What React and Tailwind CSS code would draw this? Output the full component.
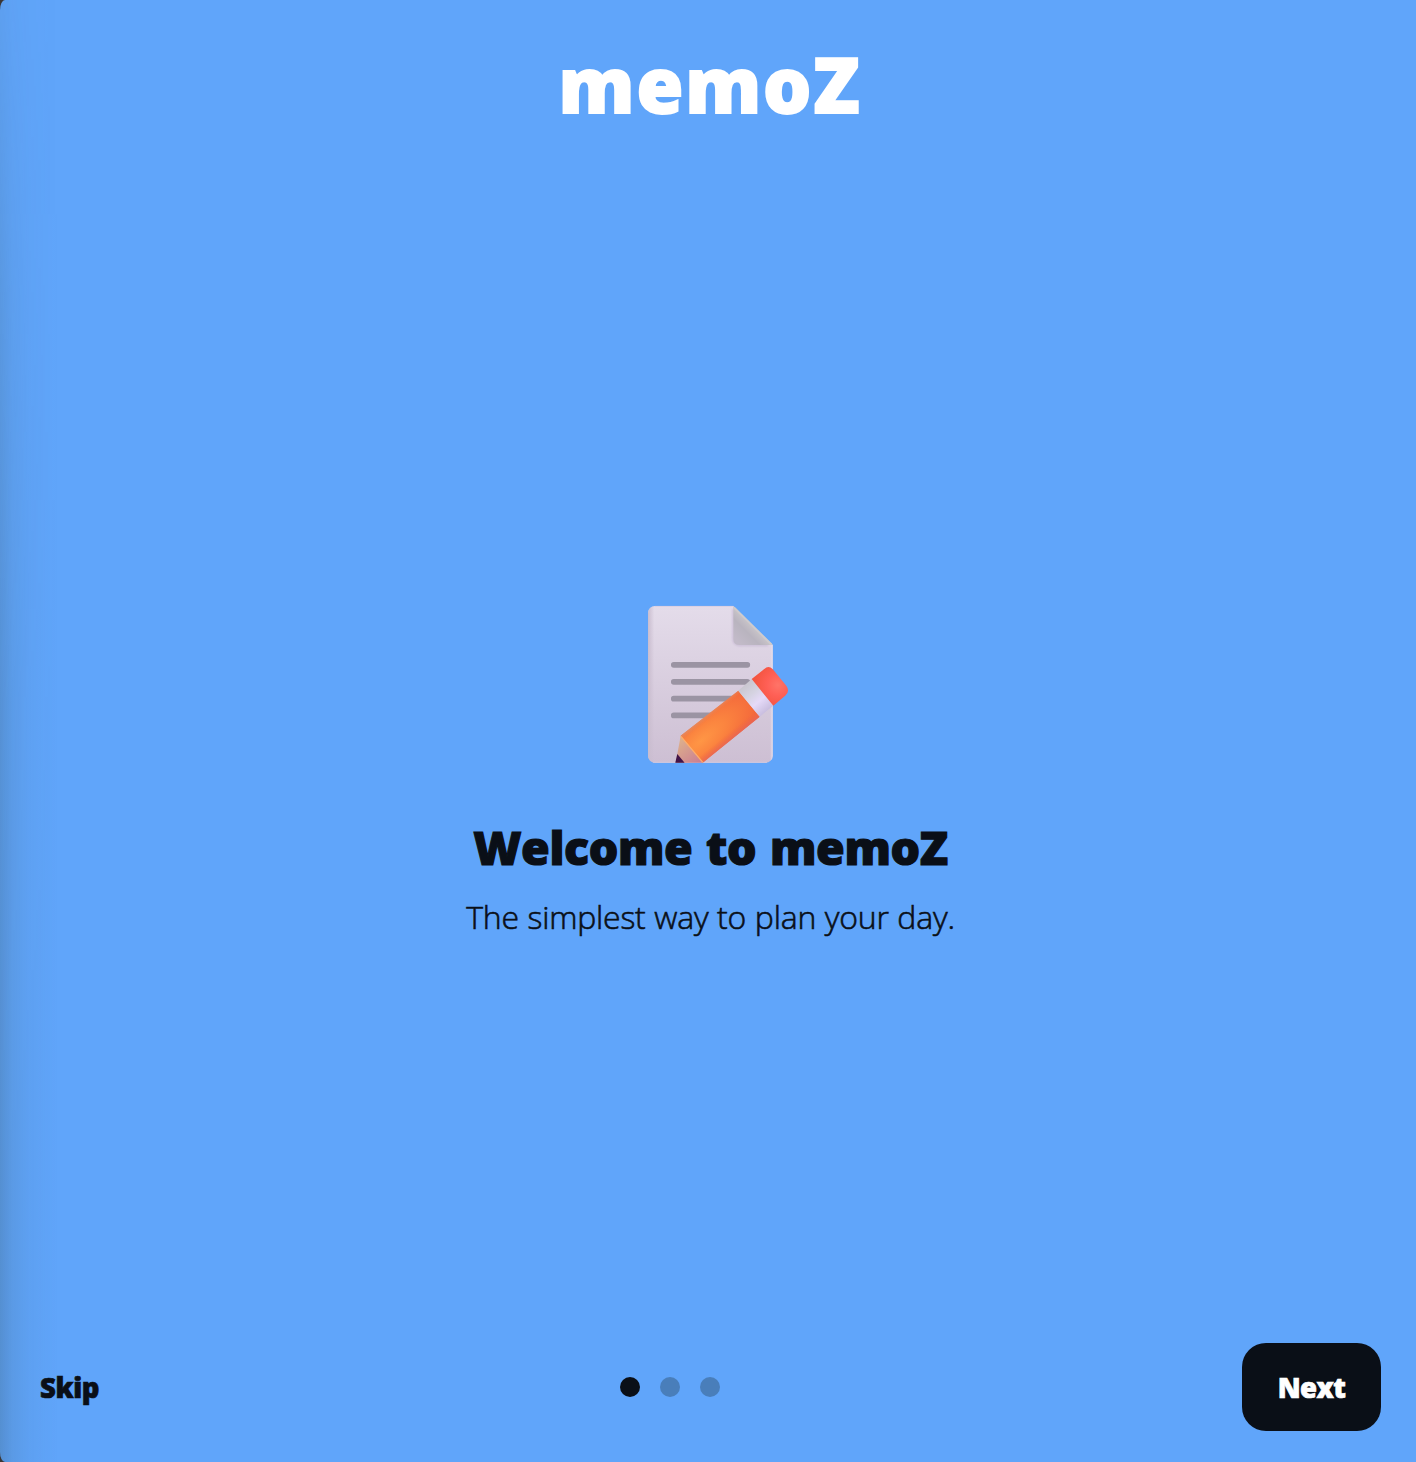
import React from "react";

const display = "font-['Open_Sans','Noto_Sans',sans-serif] font-extrabold";

function MemoIcon() {
  return (
    <svg width="145" height="159" viewBox="0 0 145 159" aria-label="Memo">
      <defs>
        <linearGradient id="paper" x1="0" y1="0" x2="0" y2="1">
          <stop offset="0" stopColor="#e4dcea" />
          <stop offset="1" stopColor="#cdbfd3" />
        </linearGradient>
        <linearGradient id="paperEdge" x1="0" y1="0" x2="1" y2="0">
          <stop offset="0" stopColor="#c9bdce" />
          <stop offset="0.05" stopColor="#c9bccf" stopOpacity="0" />
          <stop offset="0.98" stopColor="#e9e0ee" stopOpacity="0" />
          <stop offset="1" stopColor="#e4dce8" />
        </linearGradient>
        <linearGradient id="fold" gradientUnits="userSpaceOnUse" x1="92" y1="37" x2="107" y2="22">
          <stop offset="0" stopColor="#c2bac8" />
          <stop offset="0.6" stopColor="#b9b4bf" />
          <stop offset="1" stopColor="#c8c4c9" />
        </linearGradient>
        <radialGradient id="body" gradientUnits="userSpaceOnUse" cx="0" cy="0" r="1" gradientTransform="translate(55 137) rotate(-40) scale(68 26)">
          <stop offset="0" stopColor="#ff9645" />
          <stop offset="0.45" stopColor="#fb843f" />
          <stop offset="1" stopColor="#f4693b" />
        </radialGradient>
        <linearGradient id="bodyEdge" gradientUnits="userSpaceOnUse" x1="63.5" y1="109.2" x2="85" y2="135.5">
          <stop offset="0" stopColor="#e28a62" stopOpacity="0.8" />
          <stop offset="0.14" stopColor="#f27a3e" stopOpacity="0" />
          <stop offset="0.8" stopColor="#ef6540" stopOpacity="0" />
          <stop offset="1" stopColor="#e66558" stopOpacity="0.8" />
        </linearGradient>
        <linearGradient id="band" gradientUnits="userSpaceOnUse" x1="98" y1="81" x2="120" y2="107">
          <stop offset="0" stopColor="#c9c6cf" />
          <stop offset="0.35" stopColor="#d5d3e1" />
          <stop offset="0.65" stopColor="#e5daf8" />
          <stop offset="1" stopColor="#cabfe0" />
        </linearGradient>
        <radialGradient id="eraser" gradientUnits="userSpaceOnUse" cx="132" cy="81" r="24">
          <stop offset="0" stopColor="#ff7468" />
          <stop offset="0.45" stopColor="#ff6056" />
          <stop offset="1" stopColor="#f4543f" />
        </radialGradient>
        <linearGradient id="wood" gradientUnits="userSpaceOnUse" x1="33" y1="138" x2="52" y2="160">
          <stop offset="0" stopColor="#dcae8c" />
          <stop offset="1" stopColor="#cb7f92" />
        </linearGradient>
        <filter id="soft" x="-20%" y="-20%" width="140%" height="140%">
          <feGaussianBlur stdDeviation="0.9" />
        </filter>
      </defs>
      <path d="M9 2H87.3L126.7 41V152a7 7 0 0 1-7 6.8H9a7 7 0 0 1-7-7V9a7 7 0 0 1 7-7Z" fill="url(#paper)" />
      <path d="M9 2H87.3L126.7 41V152a7 7 0 0 1-7 6.8H9a7 7 0 0 1-7-7V9a7 7 0 0 1 7-7Z" fill="url(#paperEdge)" />
      <path d="M9 2.4H87.3M7 158.3H121" stroke="#d8cde0" strokeWidth="0.8" />
      <path d="M87.3 5V35q0 6.2 7 6.2H122" fill="none" stroke="#c2b3d0" strokeWidth="1.4" filter="url(#soft)" />
      <path d="M87.3 2 126.7 41H93.5Q87.3 41 87.3 35Z" fill="url(#fold)" />
      <path d="M88 3.5 125.5 40.5" stroke="#d0cbcb" strokeWidth="1.8" />
      <g stroke="#9b94a3" strokeWidth="5.7" strokeLinecap="round">
        <path d="M27.8 60.8H101.3M27.8 77.8H101.3M27.8 94.7H90M27.8 111.4H72" />
      </g>
      <path d="M34.7 131.7 57.3 158.7H29.7L31.3 150Z" fill="url(#wood)" />
      <path d="M31.3 150 38.6 158.8H29.3Z" fill="#421449" />
      <path d="M34.7 131.7 92.3 86.7 113.7 112.7 62 154.6Q58 158 56.8 158.4Z" fill="url(#body)" />
      <path d="M34.7 131.7 92.3 86.7 113.7 112.7 62 154.6Q58 158 56.8 158.4Z" fill="url(#bodyEdge)" />
      <path d="M34.9 132.3 56.8 158.3" stroke="#ffae68" strokeWidth="1.3" />
      <path d="M92.3 86.7 105.7 75 127.3 101.7 113.7 112.7Z" fill="url(#band)" />
      <path d="M105.7 75 118.3 65Q122.5 61 126.8 65.2L140.3 81.8Q144.3 87.3 139.2 91.7L127.3 101.7Z" fill="url(#eraser)" />
    </svg>
  );
}

const dots = ["bg-[#0a0f17]", "bg-[#497eba]", "bg-[#497eba]"];

export default function App() {
  return (
    <div className="h-[1462px] w-[1416px] bg-[#3b3635]">
      <div className="relative flex h-full flex-col overflow-hidden rounded-tl-[5px_10px] rounded-bl-[5px_10px] bg-[#60a5fa] font-['Open_Sans','Noto_Sans',sans-serif] text-[#0a0f17]">
        <div className="pointer-events-none absolute inset-y-0 left-0 w-[60px] bg-[linear-gradient(to_right,rgba(50,75,80,0.24)_0px,rgba(50,75,80,0.12)_12px,rgba(50,75,80,0.05)_28px,transparent_58px)] [mask-image:linear-gradient(to_bottom,rgba(0,0,0,0.25),rgba(0,0,0,0.6)_300px,rgba(0,0,0,0.9)_700px,black_1200px)]" />
        <header className="flex h-[168px] shrink-0 items-center justify-center pl-1">
          <h1 className={`${display} text-[76px] leading-none tracking-[1.8px] text-white [-webkit-text-stroke:1.8px_white]`}>memoZ</h1>
        </header>
        <main className="flex flex-1 flex-col items-center pt-[436px]">
          <div className="pl-[21px]"><MemoIcon /></div>
          <h2 className={`${display} mt-[52px] pl-[5px] text-[46.5px] leading-[64px] tracking-[-0.4px] [word-spacing:2px] whitespace-nowrap [-webkit-text-stroke:1.2px_#0a0f17]`}>Welcome to memoZ</h2>
          <p className="mt-[16px] pl-[5px] text-[32px] leading-[44px] font-light tracking-[-0.22px] [word-spacing:0.6px] whitespace-nowrap [-webkit-text-stroke:0.6px_#0a0f17]">The simplest way to plan your day.</p>
        </main>
        <footer className="flex h-[119px] shrink-0 items-start justify-between pr-[35px] pl-10">
          <button className={`${display} h-[88px] w-[58px] pt-[2px] text-left text-[27.5px] tracking-[-0.4px] [-webkit-text-stroke:0.7px_#0a0f17]`}>Skip</button>
          <div className="flex h-[88px] items-center gap-5">
            {dots.map((color, i) => (
              <span key={i} className={`size-5 rounded-full ${color}`} />
            ))}
          </div>
          <button className={`${display} h-[88px] w-[139px] rounded-[24px] bg-[#0a0f17] pt-[2px] text-[27.5px] tracking-[-0.6px] text-white [-webkit-text-stroke:0.7px_white]`}>Next</button>
        </footer>
      </div>
    </div>
  );
}
